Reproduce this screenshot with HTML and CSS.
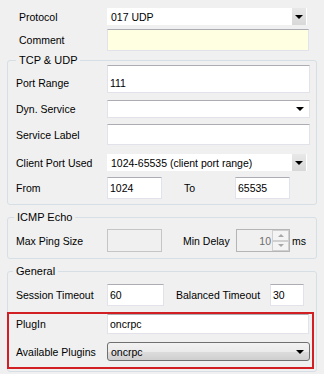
FILE: index.html
```html
<!DOCTYPE html>
<html>
<head>
    <meta charset="UTF-8">
    <title>Protocol Settings</title>
    <link rel="stylesheet" href="styles.css">
</head>
<body>

    <div class="panel">

        <div class="row top r-protocol">
            <span class="lbl">Protocol</span>
            <div class="combo flat w200"><span class="val">017 UDP</span><span class="btn"><i class="tri"></i></span></div>
        </div>
        <div class="row top r-comment">
            <span class="lbl">Comment</span>
            <div class="edit comment w202"></div>
        </div>

        <fieldset class="group g-tcp">
            <legend>TCP &amp; UDP</legend>
            <div class="row r-port">
                <span class="lbl">Port Range</span>
                <div class="edit w203">111</div>
            </div>
            <div class="row r-dyn">
                <span class="lbl">Dyn. Service</span>
                <div class="combo boxed w203"><span class="val"></span><i class="tri"></i></div>
            </div>
            <div class="row r-svc">
                <span class="lbl">Service Label</span>
                <div class="edit w203"></div>
            </div>
            <div class="row r-client">
                <span class="lbl">Client Port Used</span>
                <div class="combo flat w200"><span class="val">1024-65535 (client port range)</span><span class="btn"><i class="tri"></i></span></div>
            </div>
            <div class="row r-from">
                <span class="lbl">From</span>
                <div class="edit w55">1024</div>
                <span class="lbl2 to">To</span>
                <div class="edit w55">65535</div>
            </div>
        </fieldset>

        <fieldset class="group g-icmp">
            <legend>ICMP Echo</legend>
            <div class="row r-ping">
                <span class="lbl">Max Ping Size</span>
                <div class="edit disabled w55"></div>
                <span class="lbl2 delay">Min Delay</span>
                <div class="spin">
                    <span class="num">10</span>
                    <span class="arrows">
                        <span class="sbtn"><i class="up"></i></span>
                        <span class="sbtn"><i class="down"></i></span>
                    </span>
                </div>
                <span class="unit">ms</span>
            </div>
        </fieldset>

        <fieldset class="group g-general">
            <legend>General</legend>
            <div class="row r-session">
                <span class="lbl">Session Timeout</span>
                <div class="edit w57">60</div>
                <span class="lbl2 balanced">Balanced Timeout</span>
                <div class="edit w34">30</div>
            </div>
            <div class="highlight">
                <div class="row r-plugin">
                    <span class="lbl">PlugIn</span>
                    <div class="edit w202">oncrpc</div>
                </div>
                <div class="row r-avail">
                    <span class="lbl">Available Plugins</span>
                    <div class="combo button w203"><span class="val">oncrpc</span><i class="tri"></i></div>
                </div>
            </div>
        </fieldset>

    </div>

</body>
</html>
```

FILE: styles.css
```css
* {
    box-sizing: border-box;
}

body {
    margin: 0;
    background: #f0f0f0;
    font-family: "Liberation Sans", Arial, sans-serif;
    font-size: 10.5px;
    color: #000;
}

.panel {
    width: 324px;
    height: 374px;
    overflow: hidden;
    padding: 8px 0 0 7px;
}

.row {
    display: flex;
    align-items: center;
}

.lbl {
    width: 99px;
    padding-left: 8px;
    flex-shrink: 0;
    white-space: nowrap;
}

.top .lbl {
    width: 100px;
    padding-left: 12px;
}

.lbl2 {
    white-space: nowrap;
    flex-shrink: 0;
}

/* row heights & spacing */
.r-protocol { height: 17px; }
.r-comment  { height: 22px; margin-top: 4px; }
.r-port     { height: 28px; }
.r-dyn      { height: 18px; margin-top: 7px; }
.r-svc      { height: 21px; margin-top: 6px; }
.r-client   { height: 17px; margin-top: 9px; }
.r-from     { height: 22px; margin-top: 6px; }
.r-ping     { height: 23px; margin-top: 7px; }
.r-session  { height: 22px; margin-top: 8px; }
.r-plugin   { height: 20px; }
.r-avail    { height: 19px; margin-top: 8px; }

.r-port .lbl,
.r-port .edit {
    padding-top: 7px;
}

.row > .edit,
.row > .combo,
.row > .spin {
    height: 100%;
}

.w34  { width: 34px; }
.w55  { width: 55px; }
.w57  { width: 57px; }
.w200 { width: 200px; }
.w202 { width: 202px; }
.w203 { width: 203px; }

/* group boxes */
.group {
    width: 310px;
    margin: 0;
    padding: 0 0 5px 0;
    border: 1px solid #d5dfe5;
    border-radius: 3px;
    min-width: 0;
}

.group legend {
    line-height: 10px;
    padding: 0 3px;
    margin-left: 8px;
    font-size: 11px;
}

.g-tcp { margin-top: 4px; }
.g-icmp { margin-top: 7px; padding-bottom: 6px; }
.g-icmp legend { margin-left: 6px; }
.g-general { margin-top: 7px; padding-bottom: 2px; }
.g-general legend { margin-left: 5px; }

/* text boxes */
.edit {
    background: #fff;
    border: 1px solid #e2e3ea;
    border-top-color: #abadb3;
    padding: 0 2px;
    display: flex;
    align-items: center;
    white-space: nowrap;
}

.edit.comment {
    background: #ffffe1;
}

.edit.disabled {
    background: #f0f0f0;
    border-color: #c5c5c5;
}

/* combo boxes */
.combo {
    display: flex;
    align-items: center;
    background: #fff;
    white-space: nowrap;
}

.combo .val {
    flex: 1;
    padding-left: 4px;
}

.combo .tri {
    display: block;
    width: 0;
    height: 0;
    border-left: 4px solid transparent;
    border-right: 4px solid transparent;
    border-top: 4px solid #000;
}

.combo.flat .btn {
    width: 14px;
    height: 100%;
    margin-right: 1px;
    background: linear-gradient(#e8e8e8, #d8d8d8);
    display: flex;
    align-items: center;
    justify-content: center;
}

.combo.boxed {
    border: 1px solid #e2e3ea;
    border-top-color: #abadb3;
}

.combo.boxed .tri,
.combo.button .tri {
    margin-right: 5px;
}

.combo.button {
    border: 1px solid #707070;
    border-radius: 3px;
    background: linear-gradient(#f2f2f2 0%, #ebebeb 50%, #dddddd 51%, #cfcfcf 100%);
}

.combo.button .val {
    padding-left: 3px;
}

/* spacing for second columns */
.to { margin-left: 22px; width: 51px; }
.delay { margin-left: 21px; width: 53px; }
.balanced { margin-left: 12px; width: 94px; }

/* spin box */
.spin {
    width: 54px;
    border: 1px solid #b5b5b5;
    background: #f0f0f0;
    display: flex;
}

.spin .num {
    flex: 1;
    text-align: right;
    align-self: center;
    color: #6d6d6d;
    padding-right: 1px;
}

.spin .arrows {
    width: 17px;
    display: flex;
    flex-direction: column;
}

.sbtn {
    flex: 1;
    border: 1px solid #d0d0d0;
    background: #f4f4f4;
    display: flex;
    align-items: center;
    justify-content: center;
}

.sbtn i {
    width: 0;
    height: 0;
    border-left: 3px solid transparent;
    border-right: 3px solid transparent;
}

.sbtn .up { border-bottom: 3px solid #a8a8a8; }
.sbtn .down { border-top: 3px solid #a8a8a8; }

.unit {
    margin-left: 2px;
}

/* annotation frame */
.highlight {
    width: 307px;
    margin: 6px 0 0 -1px;
    padding-bottom: 6px;
    border: 2px solid #d11f24;
}

.highlight .lbl {
    width: 98px;
    padding-left: 7px;
}
```
